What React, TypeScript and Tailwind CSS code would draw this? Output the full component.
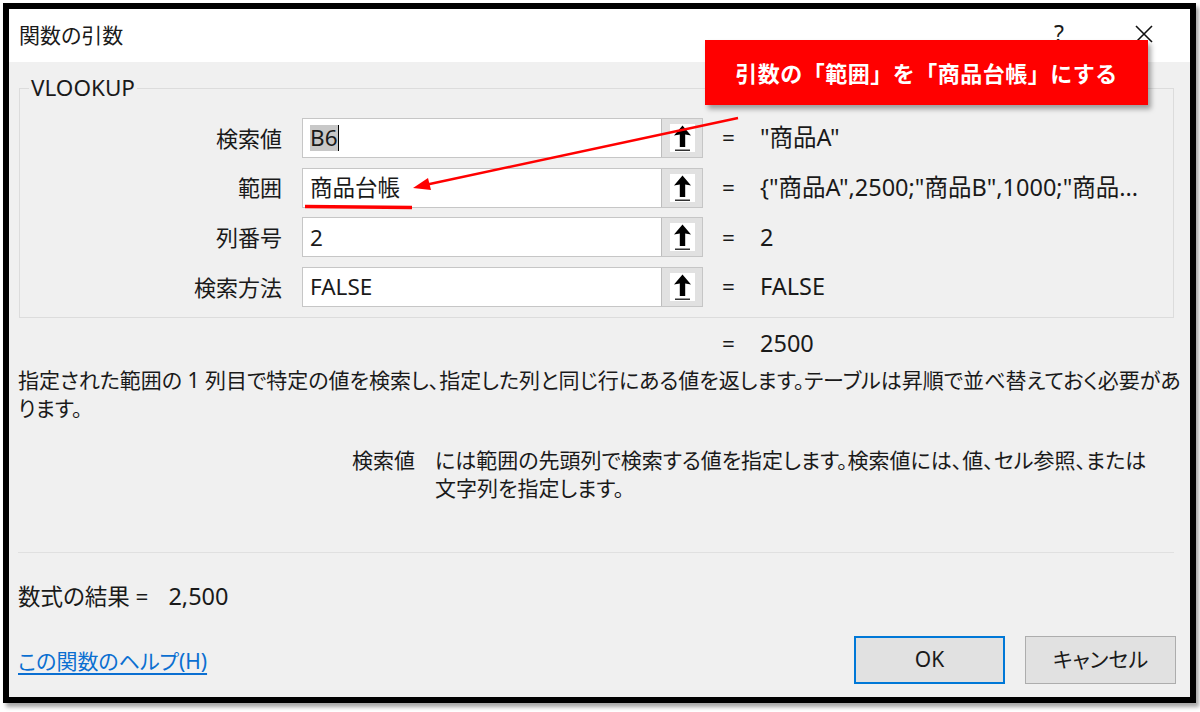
import type { ReactNode } from "react";

const ARGS = [
  { label: "検索値", value: "B6", result: "\"商品A\"", selected: true },
  { label: "範囲", value: "商品台帳", result: "{\"商品A\",2500;\"商品B\",1000;\"商品...", selected: false },
  { label: "列番号", value: "2", result: "2", selected: false },
  { label: "検索方法", value: "FALSE", result: "FALSE", selected: false },
];

function RefIcon() {
  return (
    <div className="w-[25px] h-[28px] bg-white flex items-center justify-center">
      <svg width="25" height="28" viewBox="0 0 25 28">
        <path d="M12.5 1.5 L21 11.5 L15.2 10.5 L15.2 23 L9.8 23 L9.8 10.5 L4 11.5 Z" fill="#000" />
        <rect x="5" y="25.5" width="15" height="1.5" fill="#333" />
      </svg>
    </div>
  );
}

function ArgRow({ label, value, result, selected }: { label: string; value: string; result: string; selected: boolean }) {
  return (
    <div className="flex items-center h-[40px]">
      <div className="w-[263px] text-right pr-[1px] text-[22px]">{label}</div>
      <div className="ml-[19px] flex h-[40px] border border-[#c6c6c6] bg-white">
        <div className="w-[358px] flex items-center pl-[7px]">
          {selected ? (
            <>
              <span className="bg-[#c8c8c8] leading-[26px]">{value}</span>
              <span className="w-[1px] h-[26px] bg-black" />
            </>
          ) : (
            <span>{value}</span>
          )}
        </div>
        <div className="w-[41px] bg-[#e1e1e1] border-l border-[#bdbdbd] flex items-center justify-center">
          <RefIcon />
        </div>
      </div>
      <div className="ml-[19px] w-[38px]">=</div>
      <div className="whitespace-nowrap text-[23.5px]">{result}</div>
    </div>
  );
}

function Btn({ children, primary }: { children: ReactNode; primary?: boolean }) {
  return (
    <button
      className={`w-[151px] h-[48px] bg-[#e1e1e1] flex items-center justify-center ${
        primary ? "border-2 border-[#0078d7]" : "border border-[#adadad]"
      }`}
    >
      {children}
    </button>
  );
}

export default function App() {
  return (
    <div className="w-[1200px] h-[712px] bg-white overflow-hidden font-['Noto_Sans','Noto_Sans_CJK_JP',sans-serif] [font-feature-settings:'palt'] text-[22.5px] text-[#1a1a1a] relative">
      <div className="ml-[3px] mt-[3px] w-[1193px] h-[700px] border-[6px] border-black shadow-[3px_4px_4px_rgba(0,0,0,0.35)] flex flex-col">
        {/* title bar */}
        <div className="h-[53px] bg-white flex items-center pl-[10px] pr-[36px] shrink-0">
          <div className="flex-1 text-[21px] pt-[1px]">関数の引数</div>
          <div className="text-[23px] mr-[70px] -mt-[4px]">?</div>
          <svg width="20" height="20" viewBox="0 0 20 20" className="-mt-[4px]">
            <path d="M2 2 L18 18 M18 2 L2 18" stroke="#111" strokeWidth="1.6" />
          </svg>
        </div>

        {/* body */}
        <div className="flex-1 bg-[#f0f0f0] flex flex-col pl-[9px] pr-[16px]">
          <fieldset className="ml-[1px] mt-[15px] border border-[#dcdcdc] pt-[19px] pb-[10px]">
            <legend className="ml-[9px] px-[2px] leading-[22px]">VLOOKUP</legend>
            <div className="flex flex-col gap-[9.7px]">
              {ARGS.map((a) => (
                <ArgRow key={a.label} {...a} />
              ))}
            </div>
          </fieldset>

          <div className="flex h-[28px] items-center mt-[12px] pl-[704px]">
            <span className="w-[38px]">=</span>
            <span className="text-[23.5px]">2500</span>
          </div>

          <div className="mt-[8px] leading-[28px] whitespace-nowrap text-[21px]">
            <div>指定された範囲の 1 列目で特定の値を検索し、指定した列と同じ行にある値を返します。テーブルは昇順で並べ替えておく必要があ</div>
            <div>ります。</div>
          </div>

          <div className="mt-[24px] flex leading-[28px] text-[21px]">
            <div className="w-[397px] text-right">検索値</div>
            <div className="ml-[20px]">
              <div>には範囲の先頭列で検索する値を指定します。検索値には、値、セル参照、または</div>
              <div>文字列を指定します。</div>
            </div>
          </div>

          <div className="mt-[50px] h-[1px] bg-[#e0e0e0]" />

          <div className="mt-[30px] h-[28px] flex items-center">
            <span>数式の結果 =</span>
            <span className="ml-[20px] text-[23.5px]">2,500</span>
          </div>

          <div className="mt-[25px] flex items-center text-[21px]">
            <a href="#" className="flex-1 text-[#0b6fd1] underline underline-offset-[4px] pt-[3px]">
              この関数のヘルプ(H)
            </a>
            <div className="flex gap-[20px] mr-[-2px]">
              <Btn primary>OK</Btn>
              <Btn>キャンセル</Btn>
            </div>
          </div>
        </div>
      </div>

      {/* annotation callout */}
      <div className="absolute left-[705px] top-[40px] w-[443px] h-[65px] bg-[#ff0000] shadow-[3px_4px_5px_rgba(0,0,0,0.35)] flex items-center justify-center text-white font-bold text-[22px] tracking-[0.5px] font-['Noto_Sans_CJK_JP',sans-serif] [font-feature-settings:normal]">
        引数の「範囲」を「商品台帳」にする
      </div>
      <svg className="absolute left-0 top-0 pointer-events-none" width="1200" height="712">
        <line x1="738" y1="118" x2="425" y2="185" stroke="#ff0000" strokeWidth="2.5" />
        <polygon points="413,188 428,178 431,190" fill="#ff0000" />
        <line x1="305" y1="206.5" x2="412" y2="207.5" stroke="#ff0000" strokeWidth="3.5" />
      </svg>
    </div>
  );
}
